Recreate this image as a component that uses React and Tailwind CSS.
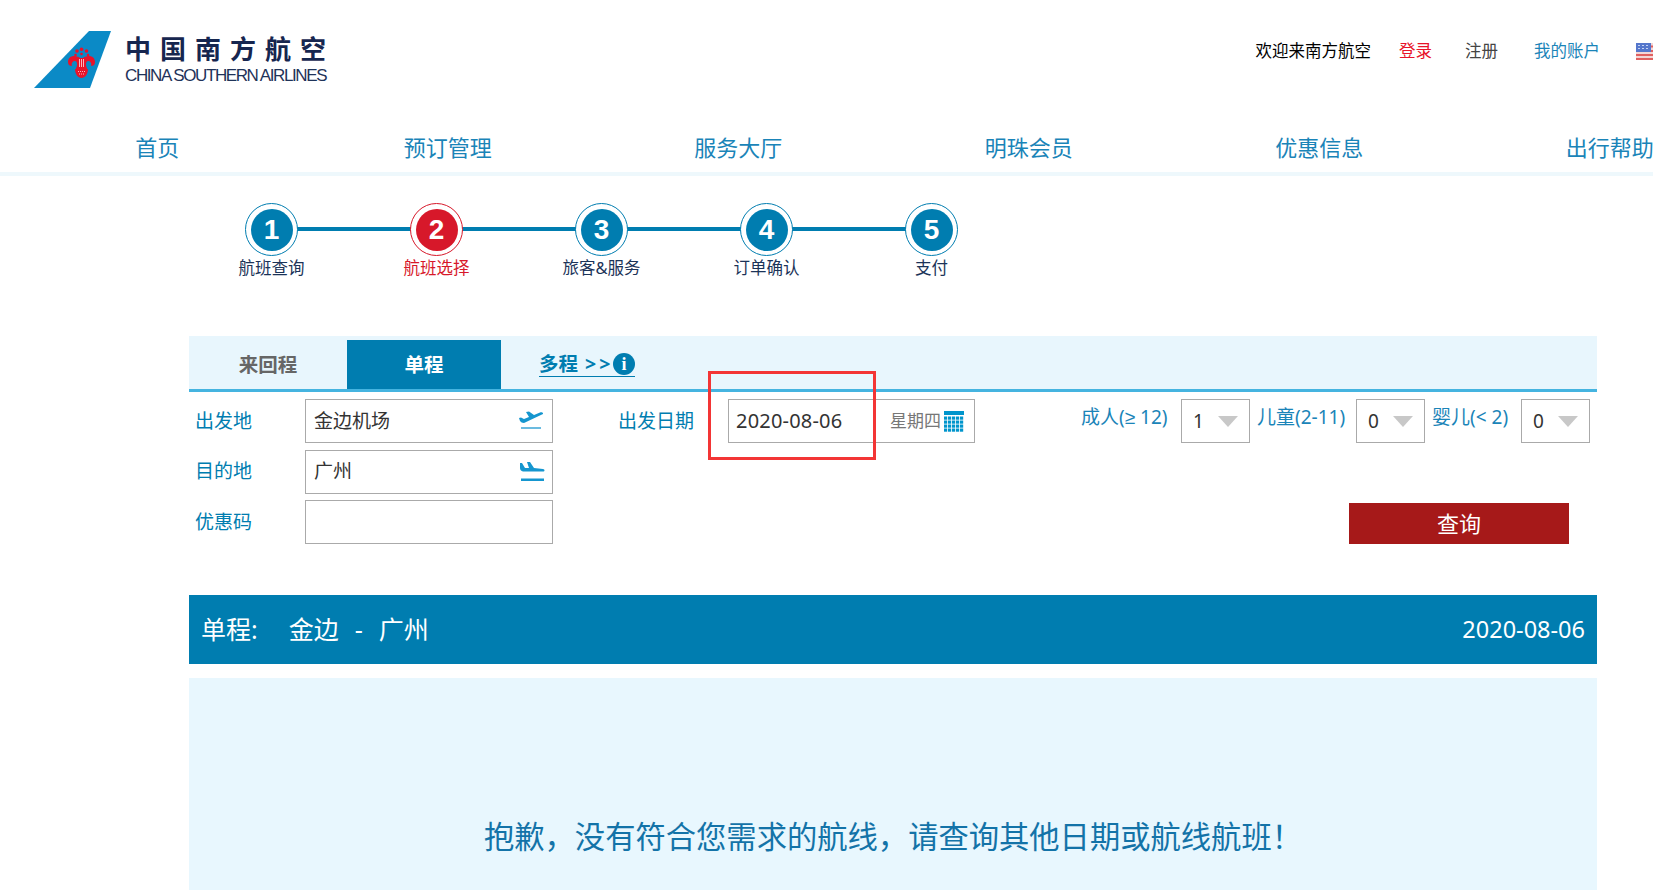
import React from 'react';

const navItems = ['首页', '预订管理', '服务大厅', '明珠会员', '优惠信息', '出行帮助'];

const steps = [
  { num: 1, label: '航班查询' },
  { num: 2, label: '航班选择', active: true },
  { num: 3, label: '旅客&服务' },
  { num: 4, label: '订单确认' },
  { num: 5, label: '支付' },
];

const Logo = () => (
  <svg width="78" height="58" viewBox="0 0 78 58" className="shrink-0">
    <polygon points="0,57 55,0 77,0 56,57" fill="#0b8ac6" />
    <g fill="#e8132a">
      <circle cx="43" cy="20" r="1.8" />
      <circle cx="47.500" cy="18.300" r="1.800" />
      <circle cx="52.500" cy="20" r="1.800" />
      <circle cx="41.500" cy="24" r="1.300" />
      <circle cx="54" cy="24" r="1.300" />
      <circle cx="47.500" cy="23" r="1.300" />
      <path d="M34 31c0-4 3-6 6-6 3 0 5 1 6 2h3c1-1 3-2 6-2 3 0 6 2 6 6 0 3-2 4-4 4 1-3-1-5-3-5-1 0-2 1-2 3 0 1 0 3 1 4v1h1c0 5-3 9-6.500 9S41 43 41 38h1v-1c1-1 1-3 1-4 0-2-1-3-2-3-2 0-4 2-3 5-2 0-4-1-4-4z" />
    </g>
    <g stroke="#fff" strokeWidth="0.700" fill="none">
      <path d="M45.500 28v8M49.500 28v8M47.500 28v8" />
      <path d="M44 40.500h7M45 43h5" strokeDasharray="1 1" />
    </g>
  </svg>
);

const FlagIcon = () => (
  <svg width="24" height="17" viewBox="0 0 24 17" className="shrink-0">
    <rect width="24" height="17" fill="#f3d6d6" />
    <rect y="2.500" width="24" height="2" fill="#e0605f" />
    <rect y="7" width="24" height="2" fill="#e0605f" />
    <rect y="11" width="24" height="2" fill="#e0605f" />
    <rect y="15" width="24" height="2" fill="#e0605f" />
    <rect width="15" height="9" fill="#5577cc" />
    <g fill="#c5d3f2">
      <rect x="2" y="2" width="2" height="1" />
      <rect x="6" y="2" width="2" height="1" />
      <rect x="10" y="2" width="2" height="1" />
      <rect x="2" y="5" width="2" height="1" />
      <rect x="6" y="5" width="2" height="1" />
      <rect x="10" y="5" width="2" height="1" />
    </g>
  </svg>
);

const TakeoffIcon = () => (
  <svg width="24" height="20" viewBox="0 0 24 20" className="mr-[2px] shrink-0">
    <path d="M0 7l2-.500 3 1.500 5-2-3-5 3-.5 5 3.500 6-2.500c2-.5 3.500.5 3 1.500L5 12c-2 0-3-1-4-2z" fill="#1596cf" />
    <rect x="2" y="16" width="20" height="2" fill="#6bbbe0" />
  </svg>
);

const LandingIcon = () => (
  <svg width="26" height="20" viewBox="0 0 26 20" className="shrink-0">
    <path d="M1 1h2l3 5h4L8 0h3l4 6 9 1c2 .5 2 2.500 0 2.500H4c-2-.5-3-1.500-3-3.500z" fill="#1596cf" />
    <rect x="2" y="16.500" width="23" height="2.500" fill="#1596cf" />
  </svg>
);

const CalendarIcon = () => (
  <svg width="20" height="21" viewBox="0 0 20 21" className="shrink-0">
    <rect width="20" height="4" fill="#0095cc" />
    {[5.5, 9.5, 13.5, 17.5].map((y) =>
      [0, 4, 8, 12, 16].map((x) => (
        <rect key={`${x}-${y}`} x={x} y={y} width="3.2" height="3.2" fill="#0095cc" />
      ))
    )}
  </svg>
);

const InfoIcon = () => (
  <span className="absolute right-0 top-[1px] flex h-[22px] w-[22px] items-center justify-center rounded-full bg-[#007db0] font-['Liberation_Serif',serif] text-[18px] font-bold leading-none tracking-normal text-white">
    i
  </span>
);

const Field = ({ label, value, icon }) => (
  <div className="flex h-[44px] items-center">
    <label className="w-[116px] pl-[6px] text-[19px] text-[#007db0]">{label}</label>
    <div className="flex h-[44px] w-[248px] items-center justify-between border border-[#aaaaaa] pl-[8px] pr-[7px] text-[19px] text-[#333333]">
      <span>{value}</span>
      {icon}
    </div>
  </div>
);

const Counter = ({ value }) => (
  <div className="flex h-[44px] w-[69px] shrink-0 items-center justify-between border border-[#aaaaaa] pl-[11px] pr-[11px] text-[19px] text-[#333333]">
    <span>{value}</span>
    <span className="h-0 w-0 border-x-[10px] border-t-[11px] border-x-transparent border-t-[#c8c8c8]" />
  </div>
);

const App = () => {
  return (
    <div className="h-[890px] w-[1653px] overflow-hidden bg-white font-['Noto_Sans','Noto_Sans_CJK_SC',sans-serif]">
      {/* top header */}
      <header className="flex h-[124px] items-start justify-between pl-[34px]">
        <div className="mt-[31px] flex">
          <Logo />
          <div className="ml-[13px] mt-[1px] w-[204px]">
            <div className="whitespace-nowrap font-['Noto_Sans_CJK_SC',sans-serif] text-[26px] font-bold leading-[32px] tracking-[9px] text-[#16264f]">
              中国南方航空
            </div>
            <div className="mt-[3px] whitespace-nowrap font-['Liberation_Sans',sans-serif] text-[17px] leading-[18px] tracking-[-1.4px] text-[#1f3359]">
              CHINA SOUTHERN AIRLINES
            </div>
          </div>
        </div>
        <div className="mt-[39px] flex items-center text-[16.5px] leading-[24px]">
          <span className="text-black">欢迎来南方航空</span>
          <a className="ml-[28px] text-[#e8132a]">登录</a>
          <a className="ml-[33px] text-[#444444]">注册</a>
          <a className="ml-[36px] text-[#1a84b8]">我的账户</a>
          <span className="ml-[36px] w-[17px] overflow-hidden">
            <FlagIcon />
          </span>
        </div>
      </header>

      {/* main nav */}
      <nav className="flex h-[48px] items-center pb-[2px] pl-[12px]">
        {navItems.map((item) => (
          <a key={item} className="w-[290.5px] shrink-0 text-center text-[22px] text-[#1a84b8]">
            {item}
          </a>
        ))}
      </nav>
      <div className="h-[4px] bg-[#eef8fc]" />

      {/* booking steps */}
      <div className="ml-[189px] mt-[27px] flex">
        {steps.map((step, i) => (
          <div key={step.num} className="relative flex w-[165px] flex-col items-center">
            {i < steps.length - 1 && (
              <div className="absolute left-1/2 top-[24px] h-[4px] w-[165px] bg-[#007db0]" />
            )}
            <div
              className={`relative flex h-[53px] w-[53px] items-center justify-center rounded-full border bg-white ${
                step.active ? 'border-[#d7182a]' : 'border-[#007db0]'
              }`}
            >
              <div
                className={`flex h-[42px] w-[42px] items-center justify-center rounded-full font-['Liberation_Sans',sans-serif] text-[28px] font-bold text-white ${
                  step.active ? 'bg-[#d7182a]' : 'bg-[#007db0]'
                }`}
              >
                {step.num}
              </div>
            </div>
            <div
              className={`whitespace-nowrap text-[16.5px] leading-[24px] ${
                step.active ? 'text-[#d7182a]' : 'text-[#1b3358]'
              }`}
            >
              {step.label}
            </div>
          </div>
        ))}
      </div>

      <main className="ml-[189px] mt-[56px] w-[1408px]">
        {/* trip type tabs */}
        <div className="flex h-[56px] items-end border-b-[3px] border-[#45b4e0] bg-[#e8f6fd]">
          <div className="flex h-[49px] w-[158px] items-center justify-center text-[19.5px] font-bold text-[#666666]">
            来回程
          </div>
          <div className="flex h-[49px] w-[154px] items-center justify-center bg-[#007db0] text-[19.5px] font-bold text-white">
            单程
          </div>
          <div className="relative mb-[12px] ml-[38px] h-[25px] w-[96px] border-b border-[#007db0] text-[19.5px] font-bold leading-[24px] text-[#007db0]">
            多程 <span className="ml-[2px] tracking-[3px]">&gt;&gt;</span>
            <InfoIcon />
          </div>
        </div>

        {/* search form */}
        <div className="flex h-[203px] pt-[7px]">
          <div className="flex flex-col gap-[6.5px]">
            <Field label="出发地" value="金边机场" icon={<TakeoffIcon />} />
            <Field label="目的地" value="广州" icon={<LandingIcon />} />
            <Field label="优惠码" value="" />
          </div>

          <div className="ml-[65px] flex h-[44px] items-center">
            <label className="w-[110px] text-[19px] text-[#007db0]">出发日期</label>
            <div className="relative flex h-[44px] w-[247px] items-center border border-[#aaaaaa] pl-[7px] pr-[10px]">
              <span className="text-[20px] tracking-[0.2px] text-[#333333]">2020-08-06</span>
              <span className="ml-auto text-[17px] text-[#777777]">星期四</span>
              <span className="ml-[3px]">
                <CalendarIcon />
              </span>
              {/* red annotation box */}
              <div className="absolute left-[-21px] top-[-29px] h-[89px] w-[168px] border-[3px] border-[#f33535]" />
            </div>
          </div>

          <div className="flex flex-1 flex-col items-end pr-[7px]">
            <div className="flex items-start text-[19px] leading-[36px] text-[#1a84b8]">
              <span className="mr-[14px] w-[86px] whitespace-nowrap">
                成人(<span className="font-['Liberation_Sans',sans-serif]">≥</span> 12)
              </span>
              <Counter value="1" />
              <span className="ml-[7px] mr-[14px] w-[85px] whitespace-nowrap">儿童(2-11)</span>
              <Counter value="0" />
              <span className="ml-[7px] mr-[14px] w-[75px] whitespace-nowrap">婴儿(&lt; 2)</span>
              <Counter value="0" />
            </div>
            <button className="mr-[21px] mt-[60px] h-[41px] w-[220px] bg-[#a61919] text-[22px] text-white">
              查询
            </button>
          </div>
        </div>

        {/* route banner */}
        <div className="flex h-[69px] items-center justify-between bg-[#007db0] px-[12px] text-white">
          <div className="flex items-center text-[25px]">
            <span>单程:</span>
            <span className="ml-[31px]">金边</span>
            <span className="ml-[16px]">-</span>
            <span className="ml-[16px]">广州</span>
          </div>
          <div className="text-[23.5px]">2020-08-06</div>
        </div>

        {/* no result message */}
        <div className="mt-[14px] h-[230px] bg-[#e8f7fe] pt-[139px] text-center text-[30.3px] leading-[40px] text-[#1373a8]">
          抱歉，没有符合您需求的航线，请查询其他日期或航线航班！
        </div>
      </main>
    </div>
  );
};

export default App;
